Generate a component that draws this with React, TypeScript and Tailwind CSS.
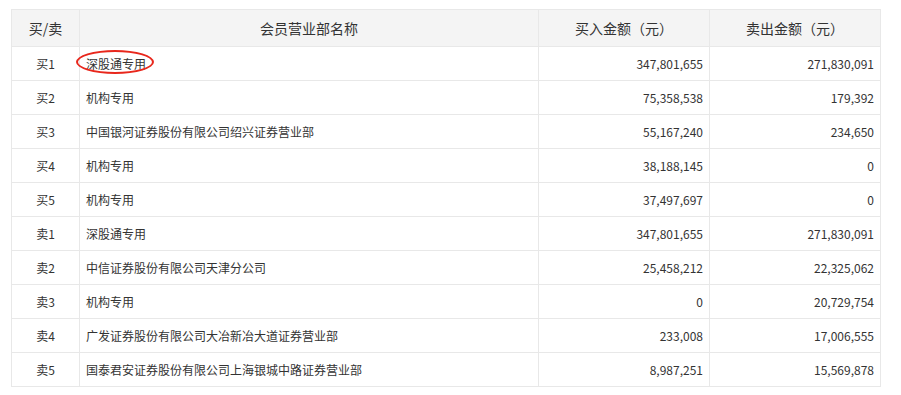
const rows: [string, string, string, string][] = [
  ["买1", "深股通专用", "347,801,655", "271,830,091"],
  ["买2", "机构专用", "75,358,538", "179,392"],
  ["买3", "中国银河证券股份有限公司绍兴证券营业部", "55,167,240", "234,650"],
  ["买4", "机构专用", "38,188,145", "0"],
  ["买5", "机构专用", "37,497,697", "0"],
  ["卖1", "深股通专用", "347,801,655", "271,830,091"],
  ["卖2", "中信证券股份有限公司天津分公司", "25,458,212", "22,325,062"],
  ["卖3", "机构专用", "0", "20,729,754"],
  ["卖4", "广发证券股份有限公司大冶新冶大道证券营业部", "233,008", "17,006,555"],
  ["卖5", "国泰君安证券股份有限公司上海银城中路证券营业部", "8,987,251", "15,569,878"],
];

export default function App() {
  return (
    <div
      className="bg-white w-[901px] h-[395px] pt-[9px] pl-[11px] text-[#333]"
      style={{ fontFamily: '"Microsoft YaHei", "Noto Sans CJK SC", sans-serif' }}
    >
      <table className="border-collapse w-[869px] table-fixed">
        <colgroup>
          <col className="w-[68px]" />
          <col className="w-[459px]" />
          <col className="w-[171px]" />
          <col className="w-[171px]" />
        </colgroup>
        <thead>
          <tr className="bg-[#f4f4f4] h-[37px] text-[14px]">
            <th className="border border-[#e8e8e8] font-normal">买/卖</th>
            <th className="border border-[#e8e8e8] font-normal">会员营业部名称</th>
            <th className="border border-[#e8e8e8] font-normal">买入金额（元）</th>
            <th className="border border-[#e8e8e8] font-normal">卖出金额（元）</th>
          </tr>
        </thead>
        <tbody className="text-[12px]">
          {rows.map((r, i) => (
            <tr key={i} className="h-[34px]">
              <td className="border border-[#e8e8e8] text-center">{r[0]}</td>
              <td className="border border-[#e8e8e8] px-[6px]">
                {i === 0 ? (
                  <span className="relative">
                    {r[1]}
                    <span className="absolute left-[-10px] top-[-5px] w-[78px] h-[24px] rounded-[50%] border-[2.5px] border-[#e8271c]" />
                  </span>
                ) : (
                  r[1]
                )}
              </td>
              <td className="border border-[#e8e8e8] text-right px-[6px]">{r[2]}</td>
              <td className="border border-[#e8e8e8] text-right px-[6px]">{r[3]}</td>
            </tr>
          ))}
        </tbody>
      </table>
    </div>
  );
}
